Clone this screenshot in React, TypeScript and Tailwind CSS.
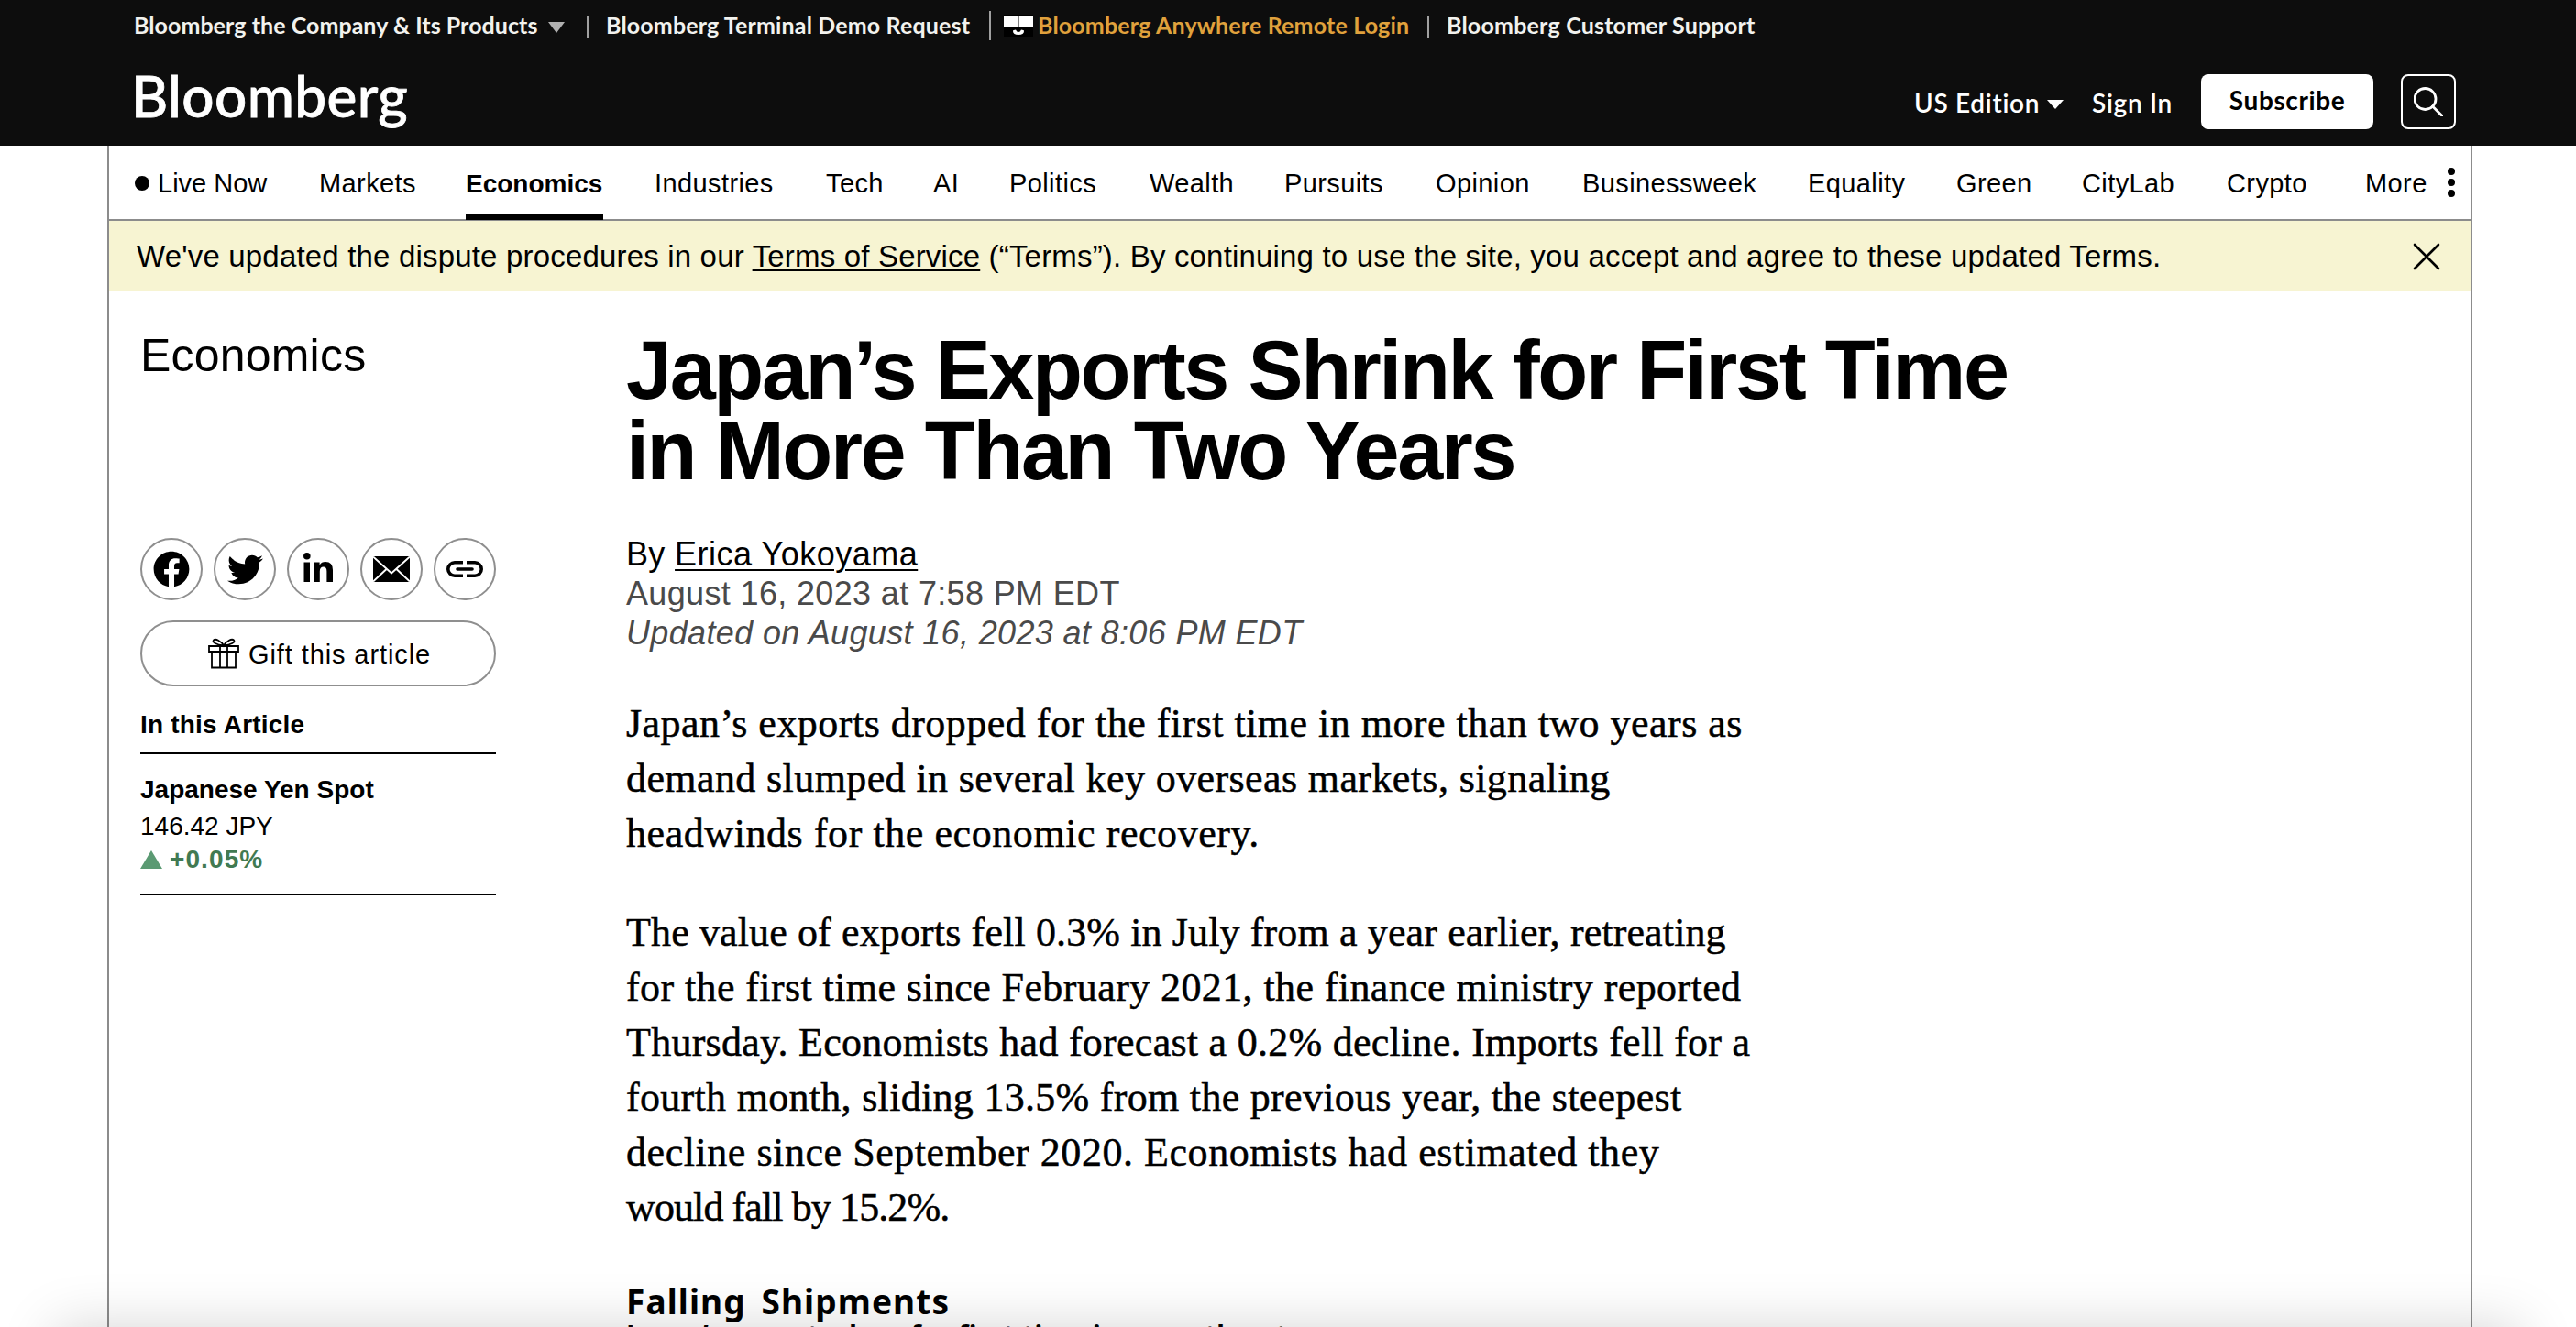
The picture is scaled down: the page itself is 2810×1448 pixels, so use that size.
import { FaFacebook, FaLinkedinIn, FaTwitter } from "react-icons/fa";

const navItems = [
  { label: "Markets", className: "w-[160px]" },
  { label: "Economics", className: "w-[206px]", active: true },
  { label: "Industries", className: "w-[187px]" },
  { label: "Tech", className: "w-[117px]" },
  { label: "AI", className: "w-[83px]" },
  { label: "Politics", className: "w-[153px]" },
  { label: "Wealth", className: "w-[147px]" },
  { label: "Pursuits", className: "w-[165px]" },
  { label: "Opinion", className: "w-[160px]" },
  { label: "Businessweek", className: "w-[246px]" },
  { label: "Equality", className: "w-[162px]" },
  { label: "Green", className: "w-[137px]" },
  { label: "CityLab", className: "w-[158px]" },
  { label: "Crypto", className: "w-[151px]" },
];

const paragraphs = [
  [
    { text: "Japan’s exports dropped for the first time in more than two years as", className: "tracking-[0.48px]" },
    { text: "demand slumped in several key overseas markets, signaling", className: "tracking-[0.4px]" },
    { text: "headwinds for the economic recovery.", className: "tracking-[0.57px]" },
  ],
  [
    { text: "The value of exports fell 0.3% in July from a year earlier, retreating", className: "tracking-[0.13px]" },
    { text: "for the first time since February 2021, the finance ministry reported", className: "tracking-[0.4px]" },
    { text: "Thursday. Economists had forecast a 0.2% decline. Imports fell for a", className: "tracking-[0.27px]" },
    { text: "fourth month, sliding 13.5% from the previous year, the steepest", className: "tracking-[0.3px]" },
    { text: "decline since September 2020. Economists had estimated they", className: "tracking-[0.55px]" },
    { text: "would fall by 15.2%.", className: "tracking-[-0.9px]" },
  ],
];

function MailIcon() {
  return (
    <svg viewBox="0 0 40 28" className="h-[28px] w-[40px]">
      <rect width="40" height="28" fill="#000" />
      <path d="M0 0.5 L20 18.5 L40 0.5 M0 27.5 L14.5 14 M40 27.5 L25.5 14" fill="none" stroke="#fff" strokeWidth="2" />
    </svg>
  );
}

function LinkIcon() {
  return (
    <svg viewBox="0 0 40 18" className="h-[18px] w-[40px]" fill="none" stroke="#000" strokeWidth="3.6">
      <path d="M18 1.8 H9 A7.2 7.2 0 0 0 9 16.2 H18 M22 1.8 H31 A7.2 7.2 0 0 1 31 16.2 H22" />
      <path d="M12 9 H28" strokeLinecap="round" />
    </svg>
  );
}

function GiftIcon() {
  return (
    <svg viewBox="0 0 34 34" className="h-[34px] w-[34px]" fill="none" stroke="#000" strokeWidth="1.8">
      <path d="M1 9 H33 V15 H1 Z M4 15 V32.5 H30 V15 M13 9 V32.5 M21 9 V32.5" />
      <path d="M17 8.5 C14 3 8 0.5 6 2.5 C4 5 9 7.5 17 8.5 C25 7.5 30 5 28 2.5 C26 0.5 20 3 17 8.5 Z" />
    </svg>
  );
}

function TopBar() {
  return (
    <div className="flex h-[53px] items-start whitespace-nowrap pl-[146px] text-[25px] font-bold leading-[54px] tracking-[0.05px] text-[#f2f2ee]">
      <span className="w-[440px]">Bloomberg the Company &amp; Its Products</span>
      <svg viewBox="0 0 18 12" className="ml-[12px] mt-[24px] h-[12px] w-[18px]">
        <path d="M0 0 H18 L9 12 Z" fill="#b0b0b0" />
      </svg>
      <span className="ml-[24px] mt-[17px] h-[24px] w-[2px] bg-[#a0a0a0]" />
      <span className="ml-[19px] w-[401px] tracking-[0.15px]">Bloomberg Terminal Demo Request</span>
      <span className="ml-[17px] mt-[12px] h-[32px] w-[2px] bg-[#a0a0a0]" />
      <svg viewBox="0 0 32 24" className="ml-[14px] mt-[16px] h-[24px] w-[32px]">
        <rect width="32" height="24" fill="#000" />
        <path d="M0 2 H15.5 V14 H0 Z M16.5 2 H32 V14 H16.5 Z" fill="#fff" />
        <path d="M10 18 Q10 16.5 13 16.5 Q14 19 16 19 Q18 19 19 16.5 Q22 16.5 22 18 Q22 22 16 22 Q10 22 10 18 Z" fill="#fff" />
      </svg>
      <span className="ml-[5px] w-[407px] tracking-[0.17px] text-[#e0a13c]">Bloomberg Anywhere Remote Login</span>
      <span className="ml-[18px] mt-[17px] h-[24px] w-[2px] bg-[#a0a0a0]" />
      <span className="ml-[19px] tracking-[0.2px]">Bloomberg Customer Support</span>
    </div>
  );
}

function Header() {
  return (
    <header className="h-[159px] bg-[#0d0d0d] font-['Lato',sans-serif] text-white">
      <TopBar />
      <div className="flex h-[106px] items-start justify-between whitespace-nowrap pl-[143px] pr-[131px]">
        <span className="text-[62px] font-medium leading-[102px] tracking-[0.4px] [-webkit-text-stroke:0.8px_#fff]">
          Bloomberg
        </span>
        <div className="flex items-start pt-[28px] text-[28px] font-semibold leading-[62px] tracking-[0.7px]">
          <span className="w-[136px]">US Edition</span>
          <svg viewBox="0 0 18 10" className="ml-[9px] mt-[28px] h-[10px] w-[18px]">
            <path d="M0 0 H18 L9 10 Z" fill="#fff" />
          </svg>
          <span className="ml-[31px] w-[88px]">Sign In</span>
          <button className="ml-[31px] h-[60px] w-[188px] rounded-lg bg-white pb-[3px] text-[28px] font-bold leading-[57px] tracking-[0.6px] text-black">
            Subscribe
          </button>
          <span className="ml-[30px] flex h-[60px] w-[60px] items-center justify-center rounded-lg border-2 border-white">
            <svg viewBox="0 0 32 32" className="-mt-[1px] h-[32px] w-[32px]" fill="none" stroke="#fff" strokeWidth="2.8">
              <circle cx="12.5" cy="13" r="11.5" />
              <path d="M20.5 21 L31 31.5" strokeLinecap="round" />
            </svg>
          </span>
        </div>
      </div>
    </header>
  );
}

function Nav() {
  return (
    <nav className="flex h-[82px] border-b-2 border-[#8c8c8c] pl-[28px] text-[29px] leading-[82px] tracking-[0.4px] whitespace-nowrap">
      <span className="mt-[33px] h-[16px] w-[16px] rounded-full bg-black" />
      <span className="ml-[9px] w-[176px] tracking-[0px]">Live Now</span>
      {navItems.map((item) => (
        <span key={item.label} className={item.className}>
          {item.active ? (
            <span className="inline-block h-[80px] w-[150px] border-b-[6px] border-black text-[28px] font-bold tracking-[0px]">
              {item.label}
            </span>
          ) : (
            item.label
          )}
        </span>
      ))}
      <span className="w-[90px]">More</span>
      <span className="flex flex-col gap-[4px] pt-[24px]">
        <span className="h-[8px] w-[8px] rounded-full bg-black" />
        <span className="h-[8px] w-[8px] rounded-full bg-black" />
        <span className="h-[8px] w-[8px] rounded-full bg-black" />
      </span>
    </nav>
  );
}

function Notice() {
  return (
    <div className="flex h-[76px] items-center justify-between whitespace-nowrap bg-[#f7f4d2] pl-[30px] pr-[33px] text-[33px] leading-[76px] tracking-[0.18px]">
      <p className="pt-[2px]">
        We've updated the dispute procedures in our{" "}
        <a className="underline decoration-[2px] underline-offset-[3px]">Terms of Service</a> (“Terms”). By continuing
        to use the site, you accept and agree to these updated Terms.
      </p>
      <svg viewBox="0 0 30 30" className="mt-[2px] h-[30px] w-[30px]" fill="none" stroke="#000" strokeWidth="2.6">
        <path d="M2 2 L28 28 M28 2 L2 28" strokeLinecap="round" />
      </svg>
    </div>
  );
}

function Sidebar() {
  const share = "flex h-[68px] w-[68px] items-center justify-center rounded-full border-2 border-[#8f8f8f]";

  return (
    <aside className="w-[388px] shrink-0 whitespace-nowrap pt-[41px] text-[28px]">
      <h2 className="text-[50px] leading-[60px] tracking-[0.2px]">Economics</h2>
      <div className="mt-[169px] flex gap-3">
        <span className={share}>
          <FaFacebook className="h-[40px] w-[40px]" />
        </span>
        <span className={share}>
          <FaTwitter className="h-[39px] w-[39px]" />
        </span>
        <span className={share}>
          <svg viewBox="0 0 32 32" className="-mt-[4px] h-[32px] w-[32px]">
            <circle cx="3.8" cy="3.8" r="3.8" />
            <path d="M0.5 10.5 H7 V32 H0.5 Z M11.3 10.5 H17.6 V13.4 Q19.6 10 24 10 Q32 10 32 19 V32 H25.4 V20.5 Q25.4 15.6 21.8 15.6 Q17.8 15.6 17.8 20.5 V32 H11.3 Z" />
          </svg>
        </span>
        <span className={share}>
          <MailIcon />
        </span>
        <span className={share}>
          <LinkIcon />
        </span>
      </div>
      <button className="mt-[22px] flex h-[72px] w-full items-start rounded-full border-2 border-[#8f8f8f] pl-[72px] text-[29px] leading-[70px] tracking-[0.9px]">
        <span className="mt-[17px]">
          <GiftIcon />
        </span>
        <span className="ml-[10px]">Gift this article</span>
      </button>
      <h3 className="mt-[25px] border-b-2 border-black pb-[13px] font-bold leading-[34px] tracking-[0.2px]">
        In this Article
      </h3>
      <div className="border-b-2 border-black pb-[20px] pt-[20px]">
        <p className="font-bold leading-[38px]">Japanese Yen Spot</p>
        <p className="mt-[2px] leading-[38px]">146.42 JPY</p>
        <p className="flex items-center leading-[34px] font-bold tracking-[1.1px] text-[#417a52]">
          <svg viewBox="0 0 24 20" className="mr-[8px] h-[20px] w-[24px]">
            <path d="M12 0 L24 20 H0 Z" fill="#5b9a73" />
          </svg>
          +0.05%
        </p>
      </div>
    </aside>
  );
}

function Article() {
  return (
    <article className="ml-[142px] whitespace-nowrap pt-[43px]">
      <h1 className="text-[90px] font-bold leading-[88px] tracking-[-2.4px]">
        Japan’s Exports Shrink for First Time
        <br />
        in More Than Two Years
      </h1>
      <div className="mt-[47px] text-[36px] leading-[43px] tracking-[0.35px] text-[#4a4a4a]">
        <p className="text-black">
          By{" "}
          <a className="underline decoration-[2px] underline-offset-[4px] tracking-[0.5px]">Erica Yokoyama</a>
        </p>
        <p>August 16, 2023 at 7:58 PM EDT</p>
        <p className="italic">Updated on August 16, 2023 at 8:06 PM EDT</p>
      </div>
      <div className="mt-[48px] space-y-12 font-['Liberation_Serif',serif] text-[44px] leading-[60px] [-webkit-text-stroke:0.5px_#000]">
        {paragraphs.map((lines) => (
          <p key={lines[0].text}>
            {lines.map((line) => (
              <span key={line.text} className={`block ${line.className}`}>
                {line.text}
              </span>
            ))}
          </p>
        ))}
      </div>
      <div className="mt-[54px] font-['Noto_Sans',sans-serif] font-bold">
        <h4 className="text-[37px] leading-[36px] tracking-[1.1px] [word-spacing:6px]">Falling Shipments</h4>
        <p className="text-[29px] leading-[36px] tracking-[0.45px]">
          Japan’s exports drop for first time in more than two years
        </p>
      </div>
    </article>
  );
}

export default function App() {
  return (
    <div className="relative h-[1448px] w-[2810px] overflow-hidden bg-white font-['Liberation_Sans',sans-serif] text-black">
      <Header />
      <div className="ml-[117px] h-[1289px] w-[2580px] border-x-2 border-[#8c8c8c]">
        <Nav />
        <Notice />
        <div className="flex pl-[34px]">
          <Sidebar />
          <Article />
        </div>
      </div>
      {/* soft shade rising from the bottom edge */}
      <div className="absolute top-full right-[60px] left-[60px] h-[100px] shadow-[0_0_60px_rgba(0,0,0,0.17)]" />
    </div>
  );
}
